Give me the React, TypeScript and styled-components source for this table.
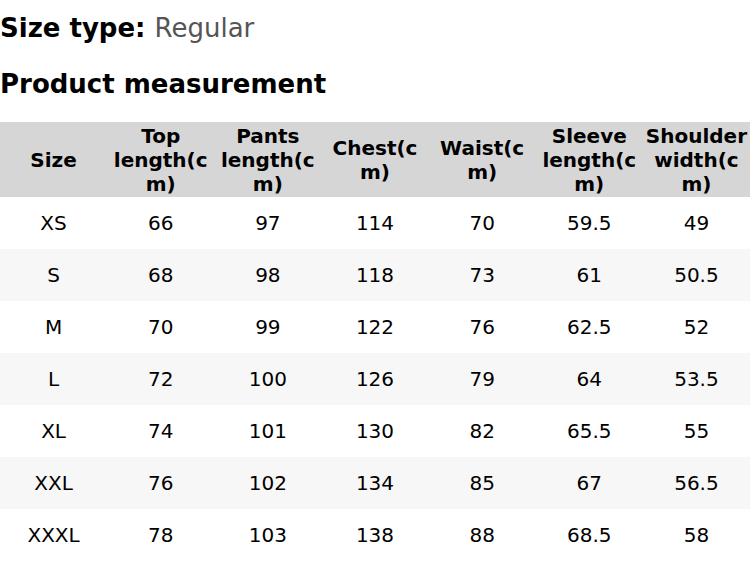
import styled, { createGlobalStyle } from "styled-components";

const GlobalStyle = createGlobalStyle`
  html, body {
    margin: 0;
    padding: 0;
    background: #ffffff;
    font-family: "DejaVu Sans", sans-serif;
    color: #000000;
  }
`;

const Page = styled.div`
  width: 750px;
  padding-top: 10px;
`;

const SizeType = styled.div`
  font-size: 26px;
  line-height: 36px;
  font-weight: 700;

  span {
    font-weight: 400;
    color: #555555;
  }
`;

const Heading = styled.h2`
  margin: 20px 0 20px;
  font-size: 26px;
  line-height: 36px;
  font-weight: 700;
`;

const Table = styled.table`
  width: 750px;
  border-collapse: collapse;
  table-layout: fixed;
  font-size: 20px;
`;

const HeadCell = styled.th`
  height: 75px;
  padding: 0 2px;
  background: #d6d6d6;
  font-weight: 700;
  line-height: 24px;
  text-align: center;
  vertical-align: middle;
  overflow-wrap: anywhere;
`;

const Row = styled.tr<{ $shade: boolean }>`
  background: ${(p) => (p.$shade ? "#f7f7f7" : "#ffffff")};
`;

const Cell = styled.td`
  height: 52px;
  padding: 0;
  text-align: center;
  vertical-align: middle;
`;

const headers = [
  "Size",
  "Top length(cm)",
  "Pants length(cm)",
  "Chest(cm)",
  "Waist(cm)",
  "Sleeve length(cm)",
  "Shoulder width(cm)",
];

const rows = [
  ["XS", "66", "97", "114", "70", "59.5", "49"],
  ["S", "68", "98", "118", "73", "61", "50.5"],
  ["M", "70", "99", "122", "76", "62.5", "52"],
  ["L", "72", "100", "126", "79", "64", "53.5"],
  ["XL", "74", "101", "130", "82", "65.5", "55"],
  ["XXL", "76", "102", "134", "85", "67", "56.5"],
  ["XXXL", "78", "103", "138", "88", "68.5", "58"],
];

export default function App() {
  return (
    <Page>
      <GlobalStyle />
      <SizeType>
        Size type: <span>Regular</span>
      </SizeType>
      <Heading>Product measurement</Heading>
      <Table>
        <thead>
          <tr>
            {headers.map((h) => (
              <HeadCell key={h}>{h}</HeadCell>
            ))}
          </tr>
        </thead>
        <tbody>
          {rows.map((r, i) => (
            <Row key={r[0]} $shade={i % 2 === 1}>
              {r.map((c, j) => (
                <Cell key={j}>{c}</Cell>
              ))}
            </Row>
          ))}
        </tbody>
      </Table>
    </Page>
  );
}
